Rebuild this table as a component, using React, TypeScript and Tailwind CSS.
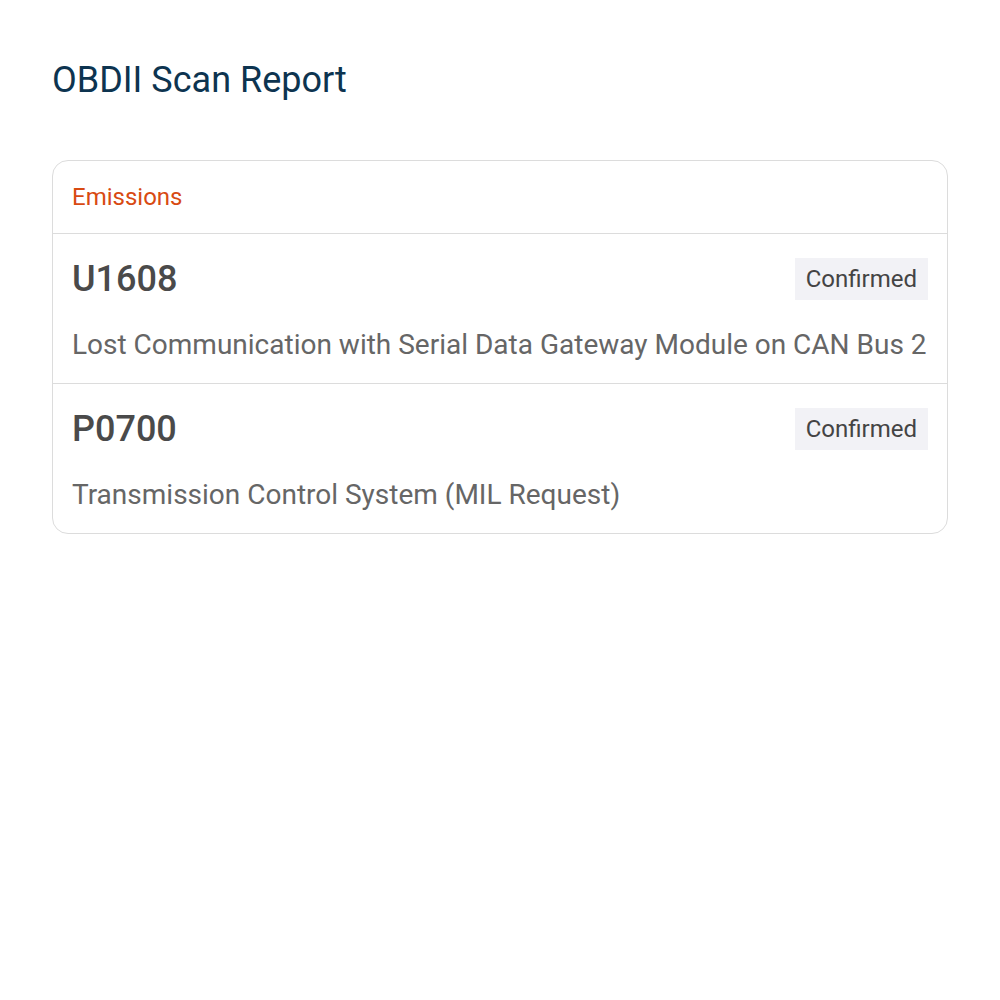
import React from 'react';

const codes = [
  { code: 'U1608', status: 'Confirmed', desc: 'Lost Communication with Serial Data Gateway Module on CAN Bus 2' },
  { code: 'P0700', status: 'Confirmed', desc: 'Transmission Control System (MIL Request)' },
];

export default function App() {
  return (
    <div className="min-h-screen bg-white px-[52px] pt-[56px]" style={{ fontFamily: 'Roboto, "Noto Sans", sans-serif' }}>
      <h1 className="text-[36px] leading-[48px] text-[#0d3450]">OBDII Scan Report</h1>

      <div className="mt-[56px] rounded-[16px] border border-[#dcdcdc]">
        <div className="h-[73px] flex items-center px-[19px] border-b border-[#dcdcdc]">
          <span className="text-[24px] text-[#d84a12]">Emissions</span>
        </div>
        {codes.map((c, i) => (
          <div key={c.code} className={i < codes.length - 1 ? 'px-[19px] pt-[24px] pb-[18px] border-b border-[#dcdcdc]' : 'px-[19px] pt-[24px] pb-[18px]'}>
            <div className="flex items-center justify-between">
              <span className="text-[36px] leading-[42px] font-medium text-[#4a4a4a]">{c.code}</span>
              <span className="bg-[#f2f2f6] px-[11px] h-[42px] flex items-center text-[24px] text-[#444]">{c.status}</span>
            </div>
            <p className="mt-[25px] text-[28px] leading-[40px] text-[#666] whitespace-nowrap">{c.desc}</p>
          </div>
        ))}
      </div>
    </div>
  );
}
